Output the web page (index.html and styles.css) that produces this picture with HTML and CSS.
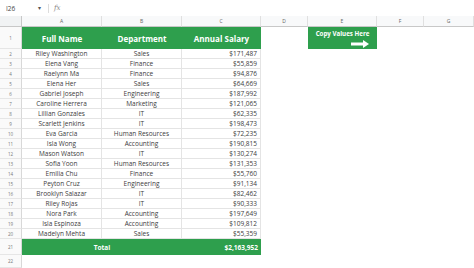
FILE: index.html
```html
<!DOCTYPE html>
<html>
<head>
<meta charset="utf-8">
<link rel="stylesheet" href="styles.css">
</head>
<body>
<div class="fbar">
  <span class="ref">I26</span>
  <span class="drop">▾</span>
  <span class="sep"></span>
  <span class="fx">fx</span>
</div>
<div class="sheet">
  <div class="corner"></div>
  <div class="colh">A</div><div class="colh">B</div><div class="colh">C</div><div class="colh">D</div><div class="colh">E</div><div class="colh">F</div><div class="colh">G</div>

  <div class="rn r1">1</div>
  <div class="hd">Full Name</div><div class="hd">Department</div><div class="hd">Annual Salary</div>
  <div class="blank"></div>
  <div class="copy"><span>Copy Values Here</span><svg class="arrow" viewBox="0 0 18 8" width="18" height="8"><path d="M0 2.4h12V0l6 4-6 4V5.6H0z" fill="#fff"/></svg></div>
  <div class="blank"></div><div class="blank"></div>

  <div class="rn">2</div><div class="c nm">Riley Washington</div><div class="c dp">Sales</div><div class="c sl">$171,487</div><div class="e"></div>
  <div class="rn">3</div><div class="c nm">Elena Vang</div><div class="c dp">Finance</div><div class="c sl">$55,859</div><div class="e"></div>
  <div class="rn">4</div><div class="c nm">Raelynn Ma</div><div class="c dp">Finance</div><div class="c sl">$94,876</div><div class="e"></div>
  <div class="rn">5</div><div class="c nm">Elena Her</div><div class="c dp">Sales</div><div class="c sl">$64,669</div><div class="e"></div>
  <div class="rn">6</div><div class="c nm">Gabriel Joseph</div><div class="c dp">Engineering</div><div class="c sl">$187,992</div><div class="e"></div>
  <div class="rn">7</div><div class="c nm">Caroline Herrera</div><div class="c dp">Marketing</div><div class="c sl">$121,065</div><div class="e"></div>
  <div class="rn">8</div><div class="c nm">Lillian Gonzales</div><div class="c dp">IT</div><div class="c sl">$62,335</div><div class="e"></div>
  <div class="rn">9</div><div class="c nm">Scarlett Jenkins</div><div class="c dp">IT</div><div class="c sl">$198,473</div><div class="e"></div>
  <div class="rn">10</div><div class="c nm">Eva Garcia</div><div class="c dp">Human Resources</div><div class="c sl">$72,235</div><div class="e"></div>
  <div class="rn">11</div><div class="c nm">Isla Wong</div><div class="c dp">Accounting</div><div class="c sl">$190,815</div><div class="e"></div>
  <div class="rn">12</div><div class="c nm">Mason Watson</div><div class="c dp">IT</div><div class="c sl">$130,274</div><div class="e"></div>
  <div class="rn">13</div><div class="c nm">Sofia Yoon</div><div class="c dp">Human Resources</div><div class="c sl">$131,353</div><div class="e"></div>
  <div class="rn">14</div><div class="c nm">Emilia Chu</div><div class="c dp">Finance</div><div class="c sl">$55,760</div><div class="e"></div>
  <div class="rn">15</div><div class="c nm">Peyton Cruz</div><div class="c dp">Engineering</div><div class="c sl">$91,134</div><div class="e"></div>
  <div class="rn">16</div><div class="c nm">Brooklyn Salazar</div><div class="c dp">IT</div><div class="c sl">$82,462</div><div class="e"></div>
  <div class="rn">17</div><div class="c nm">Riley Rojas</div><div class="c dp">IT</div><div class="c sl">$90,333</div><div class="e"></div>
  <div class="rn">18</div><div class="c nm">Nora Park</div><div class="c dp">Accounting</div><div class="c sl">$197,649</div><div class="e"></div>
  <div class="rn">19</div><div class="c nm">Isla Espinoza</div><div class="c dp">Accounting</div><div class="c sl">$109,812</div><div class="e"></div>
  <div class="rn">20</div><div class="c nm">Madelyn Mehta</div><div class="c dp">Sales</div><div class="c sl">$55,359</div><div class="e"></div>

  <div class="rn r21">21</div><div class="tot">Total</div><div class="totv">$2,163,952</div><div class="e"></div>
  <div class="rn">22</div><div class="e2"></div>
</div>
</body>
</html>
```
FILE: styles.css
```css
* { box-sizing: border-box; }
html, body { margin: 0; padding: 0; background: #fff; }
body { width: 474px; height: 268px; overflow: hidden; font-family: "Open Sans", "DejaVu Sans", sans-serif; color: #3c3c3c; }

.fbar { height: 16px; display: flex; align-items: center; font-size: 6.5px; color: #444; }
.ref { width: 38px; padding-left: 6px; }
.drop { width: 10px; font-size: 6px; color: #555; }
.sep { width: 1px; height: 9px; background: #ddd; margin-right: 5px; }
.fx { font-family: "DejaVu Serif", serif; font-style: italic; color: #888; font-size: 7px; }

.sheet {
  display: grid;
  grid-template-columns: 22px 80px 80px 79px 47px 69px 47px 50px;
  grid-template-rows: 11px 22px repeat(19, 10px) 16px 13px;
}
.corner { background: #f1f3f4; border-right: 1px solid #c8c8c8; border-bottom: 1px solid #c8c8c8; }
.colh { background: #f8f9fa; border-right: 1px solid #e0e0e0; border-bottom: 1px solid #c8c8c8; font-size: 5px; color: #666; display: flex; align-items: center; justify-content: center; }
.rn { background: #fafafa; border-right: 1px solid #d8d8d8; border-bottom: 1px solid #e6e6e6; font-size: 4.5px; color: #777; display: flex; align-items: center; justify-content: center; }
.hd { background: #2e9f4d; color: #fff; font-weight: 700; font-size: 8px; display: flex; align-items: center; justify-content: center; }
.blank { background: #fff; }
.copy { background: #2e9f4d; color: #fff; font-weight: 700; font-size: 6.2px; display: flex; flex-direction: column; align-items: center; padding-top: 2px; }
.copy .arrow { align-self: flex-end; margin: 2px 8px 0 0; }
.c { border-right: 1px solid #e4e4e4; border-bottom: 1px solid #e4e4e4; font-size: 6.5px; display: flex; align-items: center; white-space: nowrap; overflow: hidden; }
.nm, .dp { justify-content: center; }
.sl { justify-content: flex-end; padding-right: 3px; }
.e { grid-column: span 4; }
.tot { grid-column: span 2; background: #2e9f4d; color: #fff; font-weight: 700; font-size: 6.5px; display: flex; align-items: center; justify-content: center; }
.totv { background: #2e9f4d; color: #fff; font-weight: 700; font-size: 6.5px; display: flex; align-items: center; justify-content: flex-end; padding-right: 3px; }
.e2 { grid-column: span 7; }
```
